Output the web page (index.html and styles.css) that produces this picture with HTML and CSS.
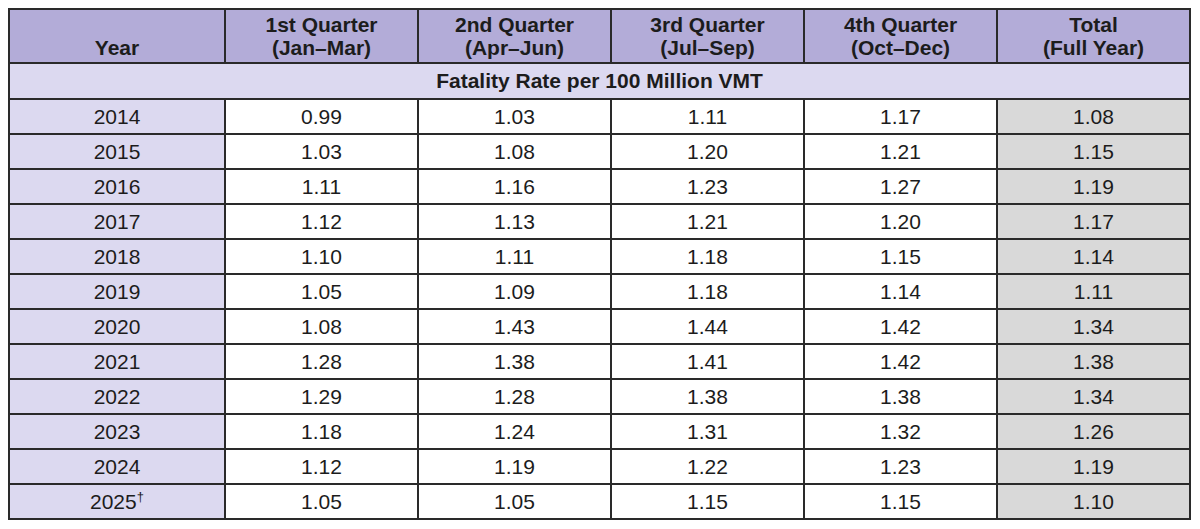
FILE: index.html
```html
<!DOCTYPE html>
<html lang="en">
<head>
<meta charset="utf-8">
<title>Fatality Rate per 100 Million VMT</title>
<link rel="stylesheet" href="styles.css">
</head>
<body>
<table class="rates">
  <colgroup>
    <col class="c-year">
    <col class="c-q">
    <col class="c-q">
    <col class="c-q">
    <col class="c-q">
    <col class="c-q">
  </colgroup>
  <thead>
    <tr class="head">
      <th>Year</th>
      <th>1st Quarter<br>(Jan–Mar)</th>
      <th>2nd Quarter<br>(Apr–Jun)</th>
      <th>3rd Quarter<br>(Jul–Sep)</th>
      <th>4th Quarter<br>(Oct–Dec)</th>
      <th>Total<br>(Full Year)</th>
    </tr>
    <tr class="sub">
      <th colspan="6">Fatality Rate per 100 Million VMT</th>
    </tr>
  </thead>
  <tbody>
    <tr><td class="yr">2014</td><td>0.99</td><td>1.03</td><td>1.11</td><td>1.17</td><td class="tot">1.08</td></tr>
    <tr><td class="yr">2015</td><td>1.03</td><td>1.08</td><td>1.20</td><td>1.21</td><td class="tot">1.15</td></tr>
    <tr><td class="yr">2016</td><td>1.11</td><td>1.16</td><td>1.23</td><td>1.27</td><td class="tot">1.19</td></tr>
    <tr><td class="yr">2017</td><td>1.12</td><td>1.13</td><td>1.21</td><td>1.20</td><td class="tot">1.17</td></tr>
    <tr><td class="yr">2018</td><td>1.10</td><td>1.11</td><td>1.18</td><td>1.15</td><td class="tot">1.14</td></tr>
    <tr><td class="yr">2019</td><td>1.05</td><td>1.09</td><td>1.18</td><td>1.14</td><td class="tot">1.11</td></tr>
    <tr><td class="yr">2020</td><td>1.08</td><td>1.43</td><td>1.44</td><td>1.42</td><td class="tot">1.34</td></tr>
    <tr><td class="yr">2021</td><td>1.28</td><td>1.38</td><td>1.41</td><td>1.42</td><td class="tot">1.38</td></tr>
    <tr><td class="yr">2022</td><td>1.29</td><td>1.28</td><td>1.38</td><td>1.38</td><td class="tot">1.34</td></tr>
    <tr><td class="yr">2023</td><td>1.18</td><td>1.24</td><td>1.31</td><td>1.32</td><td class="tot">1.26</td></tr>
    <tr><td class="yr">2024</td><td>1.12</td><td>1.19</td><td>1.22</td><td>1.23</td><td class="tot">1.19</td></tr>
    <tr><td class="yr">2025<sup class="dag">†</sup></td><td>1.05</td><td>1.05</td><td>1.15</td><td>1.15</td><td class="tot">1.10</td></tr>
  </tbody>
</table>
</body>
</html>
```

FILE: styles.css
```css
html, body {
  background: #ffffff;
}
body {
  margin: 8px;
  font-family: "Liberation Sans", Arial, sans-serif;
  color: #1c1c1c;
}
.rates {
  border-collapse: collapse;
  table-layout: fixed;
  width: 1183px;
  border: 2px solid #2a2a2a;
}
.c-year { width: 216px; }
.c-q { width: 193px; }
.rates th,
.rates td {
  border: 2px solid #2a2a2a;
  padding: 0;
  text-align: center;
}
.head th {
  background: #b3acd8;
  font-size: 21px;
  font-weight: bold;
  line-height: 23px;
  height: 54px;
  vertical-align: bottom;
  padding-bottom: 3px;
  box-sizing: border-box;
}
.sub th {
  background: #dcd9f0;
  font-size: 21px;
  font-weight: bold;
  height: 36px;
  box-sizing: border-box;
  vertical-align: middle;
}
.rates td {
  font-size: 21px;
  height: 35px;
  box-sizing: border-box;
  background: #ffffff;
}
.rates td.yr {
  background: #dcd9f0;
}
.rates td.tot {
  background: #d9d9d9;
}
.dag {
  font-size: 13px;
  line-height: 0;
  vertical-align: 8px;
}
```
